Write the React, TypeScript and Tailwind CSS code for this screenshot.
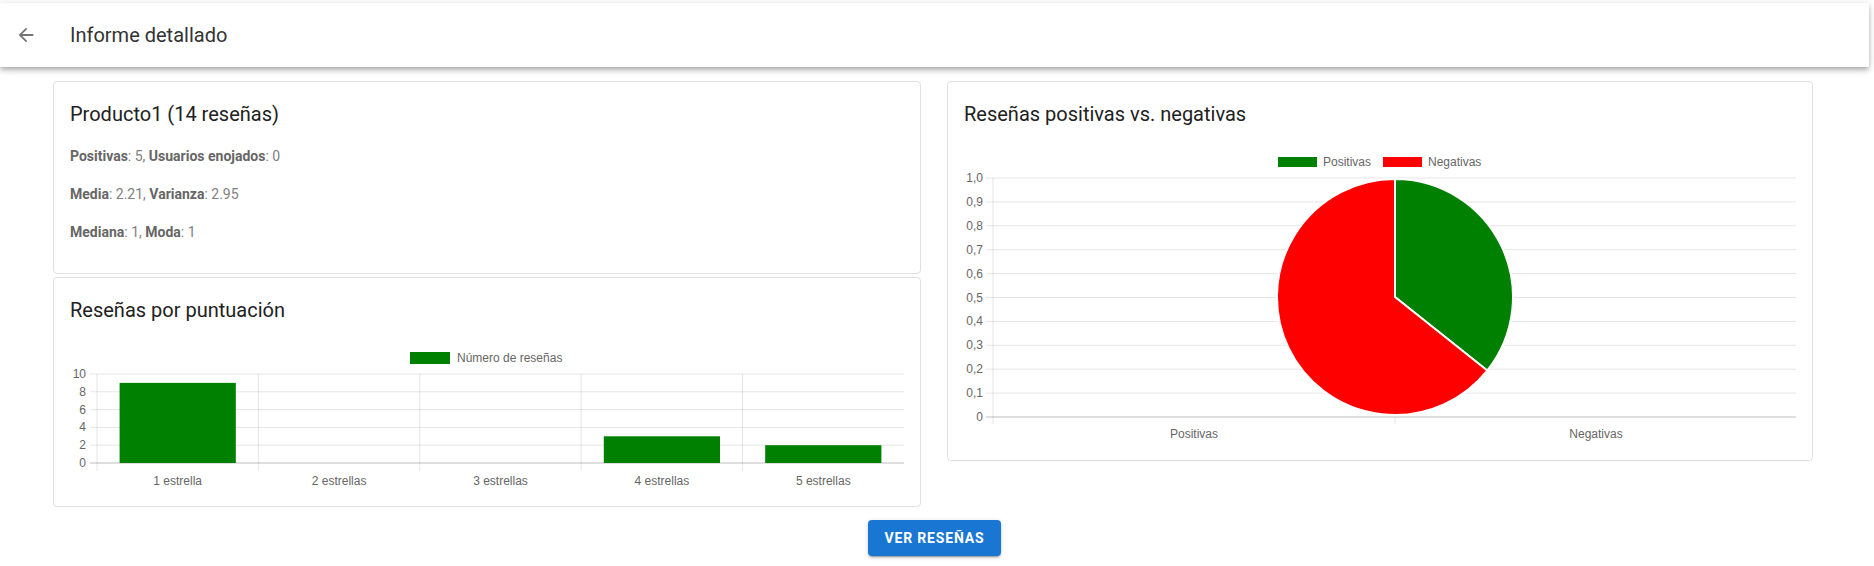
const chartFont = "'Liberation Sans', Arial, sans-serif";

const ratings = [
  { label: '1 estrella', value: 9 },
  { label: '2 estrellas', value: 0 },
  { label: '3 estrellas', value: 0 },
  { label: '4 estrellas', value: 3 },
  { label: '5 estrellas', value: 2 },
];

function BarChart() {
  const left = 27;
  const right = 834;
  const top = 48;
  const bottom = 137;
  const step = (right - left) / ratings.length;
  const unit = (bottom - top) / 10;
  const ticks = [10, 8, 6, 4, 2, 0];

  return (
    <svg width="834" height="165" viewBox="0 0 834 165" style={{ fontFamily: chartFont }}>
      <rect x="340" y="26" width="40" height="12" fill="#008000" />
      <text x="387" y="36" fontSize="12" fill="#666">
        Número de reseñas
      </text>
      {ticks.map((t) => {
        const y = bottom - t * unit;
        return (
          <g key={t}>
            <line
              x1="20"
              x2={right}
              y1={y}
              y2={y}
              stroke={t === 0 ? 'rgba(0,0,0,0.25)' : 'rgba(0,0,0,0.1)'}
            />
            <text x="16" y={y + 4} fontSize="12" fill="#666" textAnchor="end">
              {t}
            </text>
          </g>
        );
      })}
      {ratings.map((r, i) => (
        <line
          key={r.label}
          x1={left + i * step}
          x2={left + i * step}
          y1={top}
          y2="145"
          stroke="rgba(0,0,0,0.1)"
        />
      ))}
      {ratings.map((r, i) =>
        r.value > 0 ? (
          <rect
            key={r.label}
            x={left + i * step + step * 0.14}
            y={bottom - r.value * unit}
            width={step * 0.72}
            height={r.value * unit}
            fill="#008000"
          />
        ) : null,
      )}
      {ratings.map((r, i) => (
        <text
          key={r.label}
          x={left + i * step + step / 2}
          y="159"
          fontSize="12"
          fill="#666"
          textAnchor="middle"
        >
          {r.label}
        </text>
      ))}
    </svg>
  );
}

function PieChart() {
  const top = 48;
  const bottom = 287;
  const ticks = ['1,0', '0,9', '0,8', '0,7', '0,6', '0,5', '0,4', '0,3', '0,2', '0,1', '0'];
  const cx = 431;
  const cy = 167;
  const r = 118;
  const angle = (5 / 14) * Math.PI * 2;
  const ex = cx + r * Math.sin(angle);
  const ey = cy - r * Math.cos(angle);

  return (
    <svg width="832" height="315" viewBox="0 0 832 315" style={{ fontFamily: chartFont }}>
      <rect x="314" y="27" width="39" height="10" fill="#008000" />
      <text x="359" y="36" fontSize="12" fill="#666">
        Positivas
      </text>
      <rect x="419" y="27" width="39" height="10" fill="#ff0000" />
      <text x="464" y="36" fontSize="12" fill="#666">
        Negativas
      </text>
      {ticks.map((t, k) => {
        const y = top + (k * (bottom - top)) / 10;
        return (
          <g key={t}>
            <line
              x1="22"
              x2="833"
              y1={y}
              y2={y}
              stroke={t === '0' ? 'rgba(0,0,0,0.25)' : 'rgba(0,0,0,0.1)'}
            />
            <text x="19" y={y + 4} fontSize="12" fill="#666" textAnchor="end">
              {t}
            </text>
          </g>
        );
      })}
      <line x1="29" x2="29" y1={top} y2="294" stroke="rgba(0,0,0,0.1)" />
      <line x1={cx} x2={cx} y1={bottom} y2="294" stroke="rgba(0,0,0,0.1)" />
      <path
        d={`M${cx},${cy} L${cx},${cy - r} A${r},${r} 0 0 1 ${ex},${ey} Z`}
        fill="#008000"
        stroke="#fff"
        strokeWidth="2"
      />
      <path
        d={`M${cx},${cy} L${ex},${ey} A${r},${r} 0 1 1 ${cx},${cy - r} Z`}
        fill="#ff0000"
        stroke="#fff"
        strokeWidth="2"
      />
      <text x="230" y="308" fontSize="12" fill="#666" textAnchor="middle">
        Positivas
      </text>
      <text x="632" y="308" fontSize="12" fill="#666" textAnchor="middle">
        Negativas
      </text>
    </svg>
  );
}

function Stat({ items }: { items: [string, string][] }) {
  return (
    <p className="h-6 text-sm leading-6 text-[#808080]">
      {items.map(([label, value], i) => (
        <span key={label}>
          <b className="font-bold text-[#666]">{label}</b>: {value}
          {i < items.length - 1 ? ', ' : ''}
        </span>
      ))}
    </p>
  );
}

export default function App() {
  return (
    <div className="min-h-screen bg-white pr-[5px] pt-[3px] font-['Roboto',sans-serif]">
      <header className="flex h-16 items-center bg-white shadow-[0_2px_4px_-1px_rgba(0,0,0,0.2),0_4px_5px_0_rgba(0,0,0,0.14),0_1px_10px_0_rgba(0,0,0,0.12)]">
        <button type="button" className="ml-[14px] flex h-6 w-6 items-center justify-center">
          <svg width="22" height="22" viewBox="0 0 24 24" fill="rgba(0,0,0,0.54)">
            <path d="M20 11H7.83l5.59-5.59L12 4l-8 8 8 8 1.41-1.41L7.83 13H20v-2z" />
          </svg>
        </button>
        <h1 className="ml-[32px] text-xl font-normal text-[#333]">Informe detallado</h1>
      </header>

      <div className="grid grid-cols-[868px_866px] items-start gap-x-[26px] pl-[53px] pt-[14px]">
        <div className="flex flex-col gap-[3px]">
          <div className="rounded border border-[#e0e0e0] px-4 pb-[29px] pt-4">
            <h2 className="h-8 text-xl leading-8 font-normal text-[#212121]">
              Producto1 (14 reseñas)
            </h2>
            <div className="mt-[14px] flex flex-col gap-[14px]">
              <Stat
                items={[
                  ['Positivas', '5'],
                  ['Usuarios enojados', '0'],
                ]}
              />
              <Stat
                items={[
                  ['Media', '2.21'],
                  ['Varianza', '2.95'],
                ]}
              />
              <Stat
                items={[
                  ['Mediana', '1'],
                  ['Moda', '1'],
                ]}
              />
            </div>
          </div>
          <div className="rounded border border-[#e0e0e0] px-4 pb-[15px] pt-4">
            <h2 className="h-8 text-xl leading-8 font-normal text-[#212121]">
              Reseñas por puntuación
            </h2>
            <BarChart />
          </div>
        </div>

        <div className="rounded border border-[#e0e0e0] px-4 pb-[15px] pt-4">
          <h2 className="h-8 text-xl leading-8 font-normal text-[#212121]">
            Reseñas positivas vs. negativas
          </h2>
          <PieChart />
        </div>
      </div>

      <div className="flex justify-center pt-[13px]">
        <button
          type="button"
          className="h-9 rounded bg-[#1976d2] px-4 text-sm font-bold uppercase tracking-[0.06em] text-white shadow-[0_3px_1px_-2px_rgba(0,0,0,0.2),0_2px_2px_0_rgba(0,0,0,0.14),0_1px_5px_0_rgba(0,0,0,0.12)]"
        >
          Ver reseñas
        </button>
      </div>
    </div>
  );
}
